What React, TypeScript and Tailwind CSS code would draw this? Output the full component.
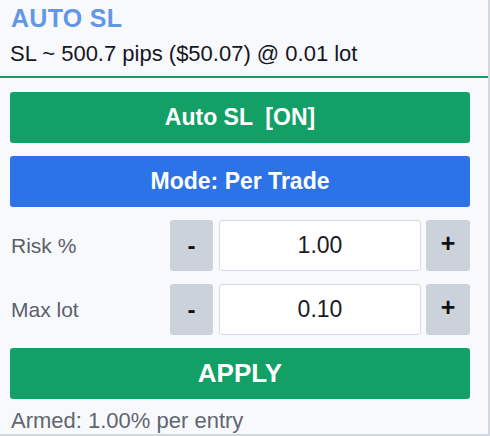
import React from "react";

function Stepper({ label, value }: { label: string; value: string }) {
  return (
    <div className="flex items-center h-[51px]">
      <div className="flex-1 text-[21px] leading-[24px] text-[#5a606a] pl-[1px]">{label}</div>
      <div className="w-[43px] h-[51px] rounded-[3px] bg-[#ccd2dc] flex items-center justify-center text-[24px] font-bold text-[#111]">-</div>
      <div className="ml-[6px] w-[202px] h-[51px] rounded-[3px] bg-white border border-[#d6dbe3] flex items-center justify-center text-[23px] text-[#1a1a24]">
        {value}
      </div>
      <div className="ml-[5px] w-[44px] h-[51px] rounded-[3px] bg-[#ccd2dc] flex items-center justify-center text-[25px] font-bold text-[#111] pb-[3px]">+</div>
    </div>
  );
}

export default function App() {
  return (
    <div className="w-[490px] h-[436px] bg-[#f8f9fc] border-r-2 border-b-2 border-[#d3d8e0] font-['Liberation_Sans',Arial,sans-serif] flex flex-col overflow-hidden">
      <div className="h-[76px] pl-[10px] pt-[4px]">
        <div className="text-[25px] leading-[29px] font-bold text-[#6397e6] tracking-[0.3px] pl-[1px]">AUTO SL</div>
        <div className="mt-[9px] text-[22px] leading-[24px] text-[#16161e]">SL ~ 500.7 pips ($50.07) @ 0.01 lot</div>
      </div>
      <div className="h-[2px] bg-[#169c65]" />
      <div className="px-[10px] pt-[14px] flex flex-col gap-[13px] w-[480px]">
        <div className="h-[51px] rounded-[3px] bg-[#13a067] flex items-center justify-center text-white font-bold text-[23px] whitespace-pre">
          Auto SL  [ON]
        </div>
        <div className="h-[51px] rounded-[3px] bg-[#2c73e7] flex items-center justify-center text-white font-bold text-[23px]">
          Mode: Per Trade
        </div>
        <Stepper label="Risk %" value="1.00" />
        <Stepper label="Max lot" value="0.10" />
        <div className="h-[51px] rounded-[3px] bg-[#13a067] flex items-center justify-center text-white font-bold text-[26px]">
          APPLY
        </div>
      </div>
      <div className="pl-[11px] pt-[10px] text-[22px] leading-[24px] text-[#5f6670]">Armed: 1.00% per entry</div>
    </div>
  );
}
